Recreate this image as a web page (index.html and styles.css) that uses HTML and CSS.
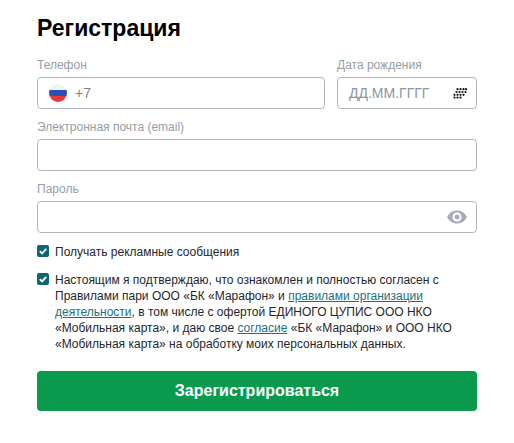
FILE: index.html
```html
<!DOCTYPE html>
<html lang="ru">
<head>
<meta charset="utf-8">
<title>Регистрация</title>
<link rel="stylesheet" href="styles.css">
</head>
<body>
<form class="form">
  <h1 class="title">Регистрация</h1>
  <div class="row">
    <div class="field grow">
      <label class="label">Телефон</label>
      <div class="input">
        <svg class="flag" viewBox="0 0 18 18" width="18" height="18"><defs><clipPath id="c"><circle cx="9" cy="9" r="9"/></clipPath></defs><g clip-path="url(#c)"><rect width="18" height="6" fill="#f2f2f4"/><rect y="6" width="18" height="6" fill="#2a4fb5"/><rect y="12" width="18" height="6" fill="#e8383a"/></g></svg>
        <span class="value">+7</span>
      </div>
    </div>
    <div class="field date">
      <label class="label">Дата рождения</label>
      <div class="input">
        <span class="placeholder">ДД.ММ.ГГГГ</span>
        <svg class="dots" viewBox="0 0 14 11" width="14" height="11" fill="#111">
          <circle cx="4.500" cy="1.200" r="1.100"/><circle cx="7.500" cy="1.200" r="1.100"/><circle cx="10.500" cy="1.200" r="1.100"/><circle cx="13" cy="1.200" r="1.100"/>
          <circle cx="3.500" cy="4" r="1.100"/><circle cx="6.500" cy="4" r="1.100"/><circle cx="9.500" cy="4" r="1.100"/><circle cx="12.500" cy="4" r="1.100"/>
          <circle cx="1.500" cy="6.800" r="1.100"/><circle cx="4.500" cy="6.800" r="1.100"/><circle cx="7.500" cy="6.800" r="1.100"/><circle cx="10.500" cy="6.800" r="1.100"/>
          <circle cx="1.500" cy="9.600" r="1.100"/><circle cx="4.500" cy="9.600" r="1.100"/><circle cx="7.500" cy="9.600" r="1.100"/>
        </svg>
      </div>
    </div>
  </div>
  <div class="field">
    <label class="label">Электронная почта (email)</label>
    <div class="input"></div>
  </div>
  <div class="field">
    <label class="label">Пароль</label>
    <div class="input end">
      <svg viewBox="0 0 20 14" width="20" height="14"><path fill="#a6adb8" fill-rule="evenodd" d="M10 0.500C5.500 0.500 1.800 3.200 0 7c1.800 3.800 5.500 6.500 10 6.500S18.200 10.800 20 7C18.200 3.200 14.500 0.500 10 0.500ZM10 11.500a4.500 4.500 0 1 1 0-9 4.500 4.500 0 0 1 0 9ZM10 9.500a2.500 2.500 0 1 0 0-5 2.500 2.500 0 0 0 0 5Z"/></svg>
    </div>
  </div>
  <div class="check first">
    <span class="box"><svg viewBox="0 0 12 12" width="12" height="12"><path d="M2.800 6.200 5 8.400 9.300 3.800" fill="none" stroke="#fff" stroke-width="1.800"/></svg></span>
    <span>Получать рекламные сообщения</span>
  </div>
  <div class="check second">
    <span class="box"><svg viewBox="0 0 12 12" width="12" height="12"><path d="M2.800 6.200 5 8.400 9.300 3.800" fill="none" stroke="#fff" stroke-width="1.800"/></svg></span>
    <span>Настоящим я подтверждаю, что ознакомлен и полностью согласен с Правилами пари ООО «БК «Марафон» и <a class="link" href="#">правилами организации деятельности</a>, в том числе с офертой ЕДИНОГО ЦУПИС ООО НКО «Мобильная карта», и даю свое <a class="link" href="#">согласие</a> «БК «Марафон» и ООО НКО «Мобильная карта» на обработку моих персональных данных.</span>
  </div>
  <button class="submit" type="button">Зарегистрироваться</button>
</form>
</body>
</html>
```

FILE: styles.css
```css
* { box-sizing: border-box; }
html, body { margin: 0; background: #fff; }
body { font-family: "Liberation Sans", sans-serif; color: #1f2328; }
.form { width: 440px; margin-left: 37px; padding-top: 13px; display: flex; flex-direction: column; }
.title { margin: 0 0 15px; font-size: 23px; line-height: 30px; font-weight: 700; color: #000; }
.row { display: flex; gap: 12px; }
.field { display: flex; flex-direction: column; margin-bottom: 11px; }
.grow { flex: 1; }
.date { width: 140px; }
.label { font-size: 12px; line-height: 14px; height: 14px; margin-bottom: 5px; color: #969ca6; }
.input { height: 32px; border: 1px solid #b2b5ba; border-radius: 4px; display: flex; align-items: center; padding: 0 11px; background: #fff; }
.end { justify-content: flex-end; padding-right: 9px; }
.flag { margin-right: 8px; flex: none; }
.value { font-size: 14px; color: #7c828b; }
.placeholder { font-size: 14px; color: #8f949c; flex: 1; }
.dots { flex: none; margin-right: -2px; }
.check { display: flex; gap: 6px; font-size: 12px; line-height: 16px; color: #23272c; }
.second { margin-top: 12px; }
.box { flex: none; width: 12px; height: 12px; border-radius: 2px; background: #0f6570; display: flex; align-items: center; justify-content: center; margin-top: 1px; }
.link { color: #19717c; text-decoration: underline; }
.submit { margin-top: 19px; height: 40px; border: 0; border-radius: 4px; background: #0a9a4e; color: #fff; font: 700 16px "Liberation Sans", sans-serif; }
```
